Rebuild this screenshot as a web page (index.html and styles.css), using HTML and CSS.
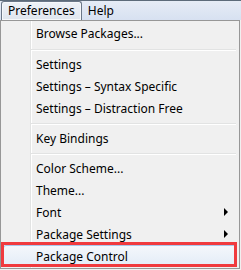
FILE: index.html
```html
<!DOCTYPE html>
<html lang="en">
<head>
  <meta charset="UTF-8" />
  <title>Preferences menu</title>
  <link rel="stylesheet" href="styles.css">
</head>
<body>
  <div class="menubar">
    <span class="menu-title active">Preferences</span>
    <span class="menu-title">Help</span>
  </div>

  <div class="dropdown">
    <div class="item">Browse Packages...</div>
    <div class="sep first"></div>
    <div class="item">Settings</div>
    <div class="item">Settings – Syntax Specific</div>
    <div class="item">Settings – Distraction Free</div>
    <div class="sep"></div>
    <div class="item">Key Bindings</div>
    <div class="sep"></div>
    <div class="item">Color Scheme...</div>
    <div class="item">Theme...</div>
    <div class="item sub">Font</div>
    <div class="item sub">Package Settings</div>
    <div class="item hover">Package Control</div>
    <div class="callout"></div>
  </div>
</body>
</html>
```

FILE: styles.css
```css
* {
  margin: 0;
  padding: 0;
  box-sizing: border-box;
}

body {
  width: 241px;
  height: 270px;
  overflow: hidden;
  background: #f0f0f0;
  font-family: "Noto Sans", "Open Sans", sans-serif;
  font-size: 12px;
  color: #000;
}

.menubar {
  height: 20px;
  display: flex;
  align-items: stretch;
  border-top: 1px solid #5d6b7a;
  background: linear-gradient(#e6ecf6, #d7e1f1);
  padding-left: 1px;
}

.menu-title {
  display: flex;
  align-items: center;
  padding: 0 6px;
  line-height: 1;
}

.menu-title.active {
  border: 1px solid #6b7788;
  border-bottom: none;
  border-radius: 3px 3px 0 0;
  background: linear-gradient(#eef2f8, #dfe5ee);
  box-shadow: inset 0 0 0 1px #f6f8fb;
}

.dropdown {
  position: relative;
  width: 240px;
  height: 249px;
  border: 1px solid #979797;
  padding: 1px 2px;
  background: linear-gradient(to right, #f0f0f0 29px, #e2e3e3 29px, #e2e3e3 30px, #fff 30px, #fff 31px, #f0f0f0 31px);
}

.item {
  position: relative;
  height: 22px;
  display: flex;
  align-items: center;
  padding-left: 32px;
  border: 1px solid transparent;
}

.item.sub::after {
  content: "";
  position: absolute;
  right: 8px;
  top: 6px;
  border-left: 4px solid #000;
  border-top: 4px solid transparent;
  border-bottom: 4px solid transparent;
}

.item.hover {
  border: 1px solid #a8c8ec;
  border-radius: 3px;
  background: linear-gradient(#f4f7fb, #e3ecf7);
}

.sep {
  height: 8px;
  margin-left: 28px;
  margin-right: 1px;
  background: linear-gradient(transparent 4px, #e2e3e3 4px, #e2e3e3 5px, #fff 5px, #fff 6px, transparent 6px);
}

.sep.first {
  height: 9px;
  background: linear-gradient(transparent 5px, #e2e3e3 5px, #e2e3e3 6px, #fff 6px, #fff 7px, transparent 7px);
}

.callout {
  position: absolute;
  left: 0;
  right: 2px;
  bottom: 1px;
  height: 25px;
  border: 3px solid #f03a3e;
}
```
